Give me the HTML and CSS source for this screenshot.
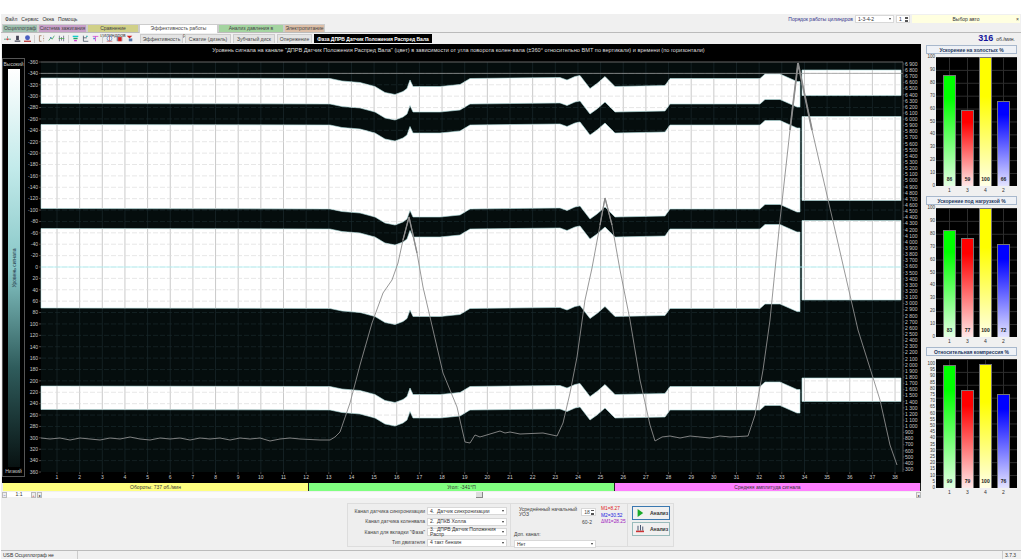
FILE: index.html
```html
<!DOCTYPE html>
<html lang="ru">
<head>
    <meta charset="UTF-8">
    <meta name="viewport" content="width=device-width, initial-scale=1.0">
    <title>Эффективность работы цилиндров</title>
    <link rel="stylesheet" href="styles.css">
</head>
<body>
    <div class="app">
        <div class="menu-row">
            <div class="menu">
                <span>Файл</span><span>Сервис</span><span>Окна</span><span>Помощь</span>
            </div>
            <div class="order">
                <span class="order-label">Порядок работы цилиндров</span>
                <div class="combo order-combo"><span>1-3-4-2</span><i></i></div>
                <div class="spin order-spin"><span>1</span><b></b></div>
                <div class="auto-pick"><span>Выбор авто</span><em>×</em></div>
            </div>
        </div>

        <div class="tabs">
            <div class="tab tab-osc">Осциллограф</div>
            <div class="tab tab-ign">Система зажигания</div>
            <div class="tab tab-cmp">Сравнение цилиндров</div>
            <div class="tab tab-active">Эффективность работы цилиндров</div>
            <div class="tab tab-prs">Анализ давления в цилиндре</div>
            <div class="tab tab-pwr">Электропитание</div>
        </div>

        <div class="toolbar">
            <div class="tools">
                <svg viewBox="0 0 10 10"><path d="M0 6h4M6 6h4M5 2v2" stroke="#2a8a6a" fill="none"/><circle cx="5" cy="6" r="1.5" fill="#d44"/></svg>
                <svg viewBox="0 0 10 10"><path d="M3 1h4v6H3zM1 8h8v1.5H1z" fill="#445"/></svg>
                <svg viewBox="0 0 10 10"><circle cx="5" cy="4" r="3.5" fill="#4a5fc0"/><path d="M0 8h10v2H0z" fill="#b44"/></svg>
                <span class="tool-sep"></span>
                <svg viewBox="0 0 10 10"><path d="M2 1v8M2 1h3M2 9h3M8 1v1M8 4v2M8 8v1" stroke="#964" fill="none"/></svg>
                <svg viewBox="0 0 10 10"><path d="M1 8l3-4 2 2 3-5" stroke="#2a9a4a" fill="none"/><circle cx="4" cy="4" r="1" fill="#36c"/></svg>
                <svg viewBox="0 0 10 10"><path d="M2 1v8M5 3v5M8 1v8" stroke="#557" fill="none"/><path d="M1 5h8" stroke="#4a4"/></svg>
                <span class="tool-sep"></span>
                <svg viewBox="0 0 10 10"><path d="M1 1h8v2H1z" fill="#1cc"/><path d="M2 4h6v2H2z" fill="#2a6"/><path d="M3 7h4v2H3z" fill="#c4c"/></svg>
                <svg viewBox="0 0 10 10"><path d="M2 1v8h7M2 4h5" stroke="#345" fill="none"/><path d="M6 1h2v2H6z" fill="#2aa"/></svg>
                <svg viewBox="0 0 10 10"><path d="M1 2h8M5 2v7" stroke="#c3c" fill="none"/><path d="M2 4h2v2H2z" fill="#36c"/></svg>
                <span class="tool-sep"></span>
                <svg viewBox="0 0 10 10"><circle cx="5" cy="5" r="3.5" fill="none" stroke="#58c"/><path d="M1 9h8M5 1v8" stroke="#c66"/></svg>
                <svg viewBox="0 0 10 10"><path d="M1 1h2v8H1zM8 3h1v6H8z" fill="#889"/><path d="M3 3h5v6H3z" fill="#c22"/></svg>
                <svg viewBox="0 0 10 10"><path d="M1 1h8L5 5z" fill="#c22"/><path d="M4 5h5v4H4z" fill="#57a"/></svg>
            </div>
            <div class="subtabs">
                <div class="subtab st-eff">Эффективность</div>
                <div class="subtab st-cmp">Сжатие (дизель)</div>
                <div class="subtab st-gear">Зубчатый диск</div>
                <div class="subtab st-adv">Опережение</div>
                <div class="subtab subtab-active">Фаза ДПРВ Датчик Положения Распред Вала</div>
            </div>
            <div class="rpm"><strong>316</strong><span>об./мин.</span></div>
        </div>

        <div class="workspace">
            <div class="left-col">
                <div class="scope">
                    <div class="scope-title">Уровень сигнала на канале "ДПРВ Датчик Положения Распред Вала" (цвет) в зависимости от угла поворота колен-вала (±360° относительно ВМТ по вертикали) и времени (по горизонтали)</div>
                    <div class="scope-body">
                        <div class="level">
                            <span>Высокий</span>
                            <div class="level-bar"><span class="level-name">Уровень сигнала</span></div>
                            <span>Низкий</span>
                        </div>
                        <svg class="plot" id="plot" viewBox="25 58 896 425" xmlns="http://www.w3.org/2000/svg"></svg>
                    </div>
                </div>
                <div class="stripes">
                    <div class="stripe stripe-rpm">Обороты: 737 об./мин</div>
                    <div class="stripe stripe-ang">Угол: -341°П</div>
                    <div class="stripe stripe-amp">Средняя амплитуда сигнала</div>
                </div>
                <div class="scroll-row">
                    <div class="zoom-btn zoom-minus">−</div>
                    <div class="zoom-val">1:1</div>
                    <div class="zoom-btn zoom-plus">+</div>
                    <div class="zoom-btn">▸</div>
                    <div class="scroll-track"><div class="scroll-thumb"></div></div>
                    <div class="zoom-btn">▸</div>
                </div>
            </div>

            <div class="side-col">
                <div class="gauge" data-step="10" data-top="100" data-values="86,59,100,66"></div>
                <div class="gauge" data-step="10" data-top="100" data-values="83,77,100,72"></div>
                <div class="gauge" data-step="5" data-top="104" data-values="99,79,100,76"></div>
            </div>
        </div>

        <div class="bottom">
            <div class="controls">
                <div class="channels">
                    <label>Канал датчика синхронизации</label>
                    <div class="combo"><span>4.&nbsp; Датчик синхронизации</span><i></i></div>
                    <label>Канал датчика коленвала</label>
                    <div class="combo"><span>2.&nbsp; ДПКВ Холла</span><i></i></div>
                    <label>Канал для вкладки "Фаза"</label>
                    <div class="combo"><span>3.&nbsp; ДПРВ Датчик Положения Распр</span><i></i></div>
                    <label>Тип двигателя</label>
                    <div class="combo"><span>4 такт бензин</span><i></i></div>
                </div>
                <div class="params">
                    <div class="param-line">
                        <span>Усреднённый начальный УОЗ</span>
                        <div class="spin"><span>18</span><b></b></div>
                    </div>
                    <div class="param-gear">60-2</div>
                    <div class="param-extra">Доп. канал:</div>
                    <div class="combo"><span>Нет</span><i></i></div>
                </div>
                <div class="marks">
                    <div class="mark-1">M1=8.27</div>
                    <div class="mark-2">M2=30.52</div>
                    <div class="mark-d">ΔM1=28.25</div>
                </div>
                <div class="actions">
                    <div class="action action-focus">
                        <svg viewBox="0 0 10 10"><path d="M2 0l7 5-7 5z" fill="#1aaa2a"/></svg>
                        <span>Анализ</span>
                    </div>
                    <div class="action">
                        <svg viewBox="0 0 10 10"><path d="M0 7h10v2H0z" fill="#c33"/><path d="M2 1h1v6H2zM5 0h1v7H5zM8 2h1v5H8z" fill="#235"/></svg>
                        <span>Анализ</span>
                    </div>
                </div>
            </div>
        </div>

        <div class="status">
            <div class="status-usb">USB Осциллограф не подключен</div>
            <div class="status-fill"></div>
            <div class="status-ver">3.7.3</div>
        </div>
    </div>

    <script src="chart.js"></script>
</body>
</html>
```

FILE: styles.css
```css
* {
    margin: 0;
    padding: 0;
    box-sizing: border-box;
}

body {
    background: white;
    color: #333;
    font-family: "Liberation Sans", Arial, sans-serif;
    font-size: 5px;
    line-height: 1;
    overflow: hidden;
}

.app {
    display: flex;
    flex-direction: column;
    height: 545px;
    width: 1020px;
    margin: 14px 0 0 1px;
    background: #f0f0f0;
}

.menu-row {
    display: flex;
    justify-content: space-between;
    align-items: center;
    height: 10px;
}

.menu {
    display: flex;
    gap: 4px;
    padding-left: 4px;
}

.order {
    display: flex;
    align-items: center;
    gap: 2px;
    height: 9px;
}

.order-label {
    color: #33338a;
}

.combo {
    display: flex;
    justify-content: space-between;
    align-items: center;
    background: white;
    border: 1px solid #d8d8d8;
    height: 8px;
    padding: 0 2px;
}

.combo i {
    width: 0;
    height: 0;
    border-left: 1.5px solid transparent;
    border-right: 1.5px solid transparent;
    border-top: 2px solid #333;
}

.order-combo {
    width: 39px;
}

.spin {
    display: flex;
    justify-content: space-between;
    align-items: center;
    background: white;
    border: 1px solid #d8d8d8;
    height: 8px;
    padding: 0 1px 0 2px;
}

.spin b {
    width: 3px;
    height: 5px;
    background:
        linear-gradient(to bottom, #555 0 1.5px, transparent 1.5px 3.5px, #555 3.5px);
}

.order-spin {
    width: 14px;
}

.auto-pick {
    position: relative;
    width: 108px;
    height: 8px;
    line-height: 8px;
    text-align: center;
    background: #ffffe0;
    margin-right: 1px;
}

.auto-pick em {
    position: absolute;
    right: 1px;
    font-style: normal;
}

.tabs {
    display: flex;
    align-items: flex-end;
    height: 9px;
    padding-left: 1px;
    border-bottom: 1px solid #bbb;
}

.tab {
    height: 8px;
    line-height: 8px;
    text-align: center;
    border: 1px solid #ccc;
    border-bottom: none;
    line-height: 7px;
    color: #444;
}

.tab-osc { width: 36px; background: #9fc0b0; }
.tab-ign { width: 49px; background: #c8a0c8; }
.tab-cmp { width: 52px; background: #d0d088; }
.tab-active { width: 79px; height: 9px; background: white; margin-bottom: -1px; }
.tab-prs { width: 66px; background: #a4d4a0; }
.tab-pwr { width: 41px; background: #dcbfa8; }

.toolbar {
    display: flex;
    align-items: center;
    height: 11px;
}

.tools {
    display: flex;
    align-items: center;
    gap: 3px;
    width: 139px;
    padding-left: 3px;
}

.tools svg {
    width: 7px;
    height: 7px;
}

.tool-sep {
    width: 1px;
    height: 8px;
    background: #ccc;
}

.subtabs {
    display: flex;
    gap: 2px;
    align-items: stretch;
    height: 9px;
}

.subtab {
    line-height: 8px;
    text-align: center;
    background: #e4e4e4;
    border: 1px solid #ccc;
    border-bottom: none;
    color: #444;
}

.st-eff { width: 43px; }
.st-cmp { width: 46px; }
.st-gear { width: 42px; }
.st-adv { width: 35px; }

.subtab-active {
    width: 118px;
    background: black;
    border-color: black;
    color: white;
    font-weight: bold;
}

.rpm {
    display: flex;
    align-items: baseline;
    gap: 3px;
    margin-left: auto;
    padding-right: 6px;
}

.rpm strong {
    color: #14149a;
    font-size: 9px;
}

.workspace {
    display: flex;
    height: 454px;
    gap: 2px;
}

.left-col {
    width: 920px;
    padding-left: 1px;
    display: flex;
    flex-direction: column;
}

.scope {
    background: black;
    height: 439px;
}

.scope-title {
    height: 14px;
    line-height: 13px;
    text-align: center;
    color: #ddd;
    font-size: 5.6px;
    padding-right: 6px;
}

.scope-body {
    display: flex;
    height: 425px;
}

.level {
    display: flex;
    flex-direction: column;
    align-items: center;
    justify-content: space-between;
    width: 23px;
    height: 419px;
    padding: 3px 0 2px;
    border: 1px solid #555;
    color: #ccc;
    flex: none;
}

.level-bar {
    position: relative;
    width: 12px;
    height: 398px;
    background: linear-gradient(to bottom, white 0%, #c2eaea 25%, #86c6c6 50%, #2f5c5c 75%, #081212 100%);
}

.level-name {
    position: absolute;
    left: 50%;
    top: 50%;
    transform: translate(-50%, -50%) rotate(-90deg);
    white-space: nowrap;
    color: #234;
}

.plot {
    display: block;
    width: 896px;
    height: 425px;
    flex: none;
}

.plot text {
    font-family: "Liberation Sans", Arial, sans-serif;
    font-size: 5px;
    fill: #ccc;
}

.stripes {
    display: flex;
    height: 8px;
    padding-left: 1px;
    color: #333;
}

.stripe {
    line-height: 8px;
    text-align: center;
    border-right: 1px solid #222;
}

.stripe-rpm { width: 306px; background: #ffff80; }
.stripe-ang { width: 306px; background: #80ff80; }
.stripe-amp { flex: 1; background: #ff80ff; }

.scroll-row {
    display: flex;
    align-items: center;
    height: 7px;
}

.zoom-btn {
    width: 5px;
    height: 6px;
    line-height: 6px;
    text-align: center;
    background: #eee;
    border: 1px solid #bbb;
    font-size: 4px;
    flex: none;
}

.zoom-minus {
    color: #22a;
}

.zoom-plus {
    color: #c22;
    margin-right: 1px;
}

.zoom-val {
    width: 24px;
    text-align: center;
    background: white;
}

.scroll-track {
    flex: 1;
    height: 6px;
    background: #fafafa;
    display: flex;
    justify-content: center;
}

.scroll-thumb {
    width: 7px;
    height: 6px;
    background: #ddd;
    border-right: 1px solid #888;
    border-bottom: 1px solid #888;
}

.side-col {
    display: flex;
    flex-direction: column;
    width: 95px;
    padding-top: 1px;
}

.gauge {
    height: 151.3px;
    padding-left: 3px;
}

.gauge-title {
    height: 9px;
    line-height: 8px;
    width: 91px;
    text-align: center;
    color: #22345a;
    font-weight: bold;
    background: #eef1f6;
    border: 1px solid #a8b8cc;
    margin-bottom: 3px;
}

.gauge-body {
    display: flex;
    height: 129px;
}

.gauge-scale {
    position: relative;
    width: 10px;
    color: #333;
}

.gauge-scale span {
    position: absolute;
    right: 1px;
    transform: translateY(-50%);
    font-size: 4.5px;
}

.gauge-plot {
    display: flex;
    align-items: flex-end;
    gap: 5px;
    width: 81px;
    padding-left: 7px;
    background-color: black;
    background-image:
        linear-gradient(to right, #2c2c2c 1px, transparent 1px),
        linear-gradient(to bottom, #2c2c2c 1px, transparent 1px);
    background-size: 18px 12.9px;
    background-position: 13px 0;
}

.bar {
    position: relative;
    width: 13px;
    border: 1px solid #777;
    border-bottom: none;
}

.bar span {
    position: absolute;
    left: 0;
    right: 0;
    bottom: 4px;
    text-align: center;
    color: #222;
    font-weight: bold;
}

.bar-1 { background: linear-gradient(to bottom, #00ff00, #00ff00 20%, #e4ffe4); }
.bar-2 { background: linear-gradient(to bottom, #ff0000, #ff0000 15%, #ffe8e8); }
.bar-3 { background: linear-gradient(to bottom, #ffff00, #ffff00 30%, #ffffe8); }
.bar-4 { background: linear-gradient(to bottom, #0000ff, #0000ff 15%, #e4e4ff); }

.gauge-names {
    display: flex;
    gap: 5px;
    padding: 2px 0 0 17px;
}

.gauge-names span {
    width: 13px;
    text-align: center;
}

.bottom {
    display: flex;
    height: 52px;
    padding: 5px 0 0 346px;
}

.controls {
    display: flex;
    width: 327px;
    height: 44px;
    border: 1px solid #ddd;
    background: #eeeeee;
}

.channels {
    display: grid;
    grid-template-columns: 77px 80px;
    grid-auto-rows: 8px;
    row-gap: 2.5px;
    column-gap: 2px;
    align-items: center;
    width: 163px;
    padding-top: 3px;
    border-right: 1px solid #ddd;
}

.channels label {
    text-align: right;
    color: #444;
}

.params {
    width: 90px;
    padding: 3px 5px 0 3px;
}

.param-line {
    display: flex;
    align-items: center;
    justify-content: space-between;
    color: #444;
    padding-left: 5px;
}

.param-line .spin {
    width: 16px;
}

.param-gear {
    text-align: right;
    padding: 3px 4px 0 0;
    color: #444;
}

.param-extra {
    padding: 7px 0 3px;
    color: #444;
}

.marks {
    width: 27px;
    padding-top: 2px;
    font-size: 4.8px;
    line-height: 6.6px;
    border-right: 1px solid #ddd;
}

.mark-1 { color: #e02020; }
.mark-2 { color: #2020e0; }
.mark-d { color: #a020c0; }

.actions {
    display: flex;
    flex-direction: column;
    gap: 2px;
    padding: 2px 0 0 4px;
}

.action {
    display: flex;
    align-items: center;
    gap: 6px;
    width: 38px;
    height: 14px;
    padding-left: 3px;
    background: #f0f0f0;
    border: 1px solid #9bb;
    font-weight: bold;
}

.action-focus {
    border-color: #3a78b0;
}

.action svg {
    width: 8px;
    height: 8px;
}

.status {
    display: flex;
    height: 9px;
    line-height: 8px;
    border-top: 1px solid #bbb;
}

.status-usb {
    width: 77px;
    padding-left: 2px;
    border-right: 1px solid #ccc;
}

.status-fill {
    flex: 1;
}

.status-ver {
    width: 19px;
    padding-left: 2px;
    border-left: 1px solid #ccc;
}
```

FILE: chart.js
```js
const SVG_NS = 'http://www.w3.org/2000/svg';
const plot = document.getElementById('plot');

const LEFT = 41, RIGHT = 901, TOP = 62, BOTTOM = 472;
const BREAK_X = 800;

// how far the signal edges move down from their base line
const edge = [
    [41, -0.5], [330, 0], [342, 2.5], [360, 4], [375, 8], [385, 14], [395, 16], [403, 13], [407, 10],
    [410, 1.5], [413, 8], [440, 8], [460, 6], [470, 0], [560, -1], [567, 1.5], [575, -2], [580, -3],
    [590, 10], [597, 5], [605, -2], [615, 8], [665, 7], [670, 0], [760, 0], [765, -4.5], [780, -4.5],
    [797, 3], [800, 3]
];

// white bands, base lines for the part left of BREAK_X; right of it they sit higher
const bands = [[78.5, 104], [125, 209], [229, 308.5], [386.5, 410]];
const RIGHT_SHIFT = -8.5;

const trace = [
    [41, 438], [50, 439], [60, 438], [70, 440], [80, 438], [90, 439], [100, 440], [110, 438], [120, 439],
    [130, 437], [140, 439], [150, 440], [160, 438], [170, 439], [180, 438], [190, 440], [200, 438], [210, 439],
    [220, 438], [230, 440], [240, 438], [250, 439], [260, 438], [270, 441], [280, 439], [290, 438], [300, 439],
    [320, 440], [330, 440], [335, 437], [340, 432], [350, 403], [360, 365], [372, 323], [383, 293], [392, 280],
    [398, 263], [403, 240], [409, 217], [417, 253], [423, 287], [430, 317], [443, 373], [457, 407], [465, 442],
    [470, 443], [475, 435], [480, 437], [490, 434], [500, 431], [505, 433], [510, 432], [520, 434], [543, 433],
    [557, 436], [563, 423], [570, 393], [577, 357], [585, 300], [592, 268], [600, 225], [605, 198], [612, 225],
    [620, 270], [630, 320], [640, 380], [650, 425], [655, 441], [662, 437], [670, 436], [680, 438], [690, 436],
    [700, 437], [710, 438], [720, 436], [730, 437], [748, 436], [755, 415], [763, 370], [770, 320], [780, 220],
    [790, 130], [798, 63], [812, 130], [835, 230], [858, 330], [880, 400], [890, 445], [897, 465]
];

function el(name, attrs, text) {
    const node = document.createElementNS(SVG_NS, name);
    Object.keys(attrs).forEach(key => node.setAttribute(key, attrs[key]));
    if (text !== undefined) {
        node.textContent = text;
    }
    plot.appendChild(node);
    return node;
}

function bandPath(top, bottom) {
    const upper = [], lower = [];
    edge.forEach(p => {
        upper.push(`${p[0]},${p[1] + top}`);
        lower.unshift(`${p[0]},${p[1] + bottom}`);
    });
    const left = `M${upper.join('L')}L${lower.join('L')}Z`;
    const t = top + RIGHT_SHIFT, b = bottom + RIGHT_SHIFT;
    return `${left}M${BREAK_X + 2},${t}L${RIGHT},${t}L${RIGHT},${b}L${BREAK_X + 2},${b}Z`;
}

function xAt(n) {
    return 57 + 22.65 * (n - 1);
}

function yAt(i) {
    return TOP + (BOTTOM - TOP) * i / 36;
}

function drawGrid(vertical, horizontal, parent) {
    let d = '';
    for (let n = 1; n <= 38; n++) {
        d += `M${xAt(n)},${TOP}V${BOTTOM}`;
    }
    const v = el('path', { d: d, stroke: vertical, 'stroke-width': 0.8, fill: 'none' });
    d = '';
    for (let i = 1; i < 36; i++) {
        d += `M${LEFT},${yAt(i)}H${RIGHT}`;
    }
    const h = el('path', { d: d, stroke: horizontal, 'stroke-width': 0.7, 'stroke-dasharray': '5 2', fill: 'none' });
    if (parent) {
        parent.appendChild(v);
        parent.appendChild(h);
    }
}

function drawPlot() {
    const allBands = bands.map(b => bandPath(b[0], b[1])).join('');

    el('rect', { x: LEFT, y: TOP, width: RIGHT - LEFT + 2, height: BOTTOM - TOP, fill: '#050d0d' });
    drawGrid('#18262a', '#1a2a2c');

    const defs = el('defs', {});
    const clip = el('clipPath', { id: 'bandClip' });
    clip.appendChild(el('path', { d: allBands }));
    defs.appendChild(clip);

    el('path', { d: allBands, fill: 'white', stroke: '#b4e0e0', 'stroke-width': 0.6 });

    const onWhite = el('g', { 'clip-path': 'url(#bandClip)' });
    drawGrid('#bcbcbc', '#dcdcdc', onWhite);

    // marker lines over everything
    el('path', { d: `M${LEFT},${TOP}H903`, stroke: '#666', 'stroke-width': 1 });
    el('path', { d: `M${LEFT},${yAt(1)}H903`, stroke: '#999', 'stroke-width': 0.8 });
    el('path', { d: `M${LEFT},${yAt(18)}H${RIGHT}`, stroke: '#a8f0f4', 'stroke-width': 0.8 });

    el('polyline', {
        points: trace.map(p => p.join(',')).join(' '),
        fill: 'none', stroke: '#8c8c8c', 'stroke-width': 0.9
    });
    el('polyline', {
        points: '790,130 798,63 812,130',
        fill: 'none', stroke: '#8c8c8c', 'stroke-width': 1.8
    });
    el('polyline', {
        points: '403,240 409,217 417,253',
        fill: 'none', stroke: '#8c8c8c', 'stroke-width': 1.3
    });
    el('polyline', {
        points: '600,225 605,198 612,225',
        fill: 'none', stroke: '#8c8c8c', 'stroke-width': 1.3
    });

    // left scale, degrees
    for (let i = 0; i <= 36; i++) {
        const value = (i - 18) * 20;
        el('text', { x: 38, y: yAt(i) + 1.8, 'text-anchor': 'end' }, value);
        el('path', { d: `M39,${yAt(i)}H41`, stroke: '#777', 'stroke-width': 0.6 });
    }

    // right scale, time
    el('path', { d: `M903,${TOP}V${BOTTOM}`, stroke: '#666', 'stroke-width': 0.8 });
    for (let i = 0; i <= 66; i++) {
        const value = 6900 - i * 100;
        const label = value >= 1000 ? `${Math.floor(value / 1000)} ${String(value % 1000).padStart(3, '0')}` : value;
        el('text', { x: 905, y: 64 + i * 6.14 + 1.8 }, label);
        el('path', { d: `M903,${64 + i * 6.14}h1.5`, stroke: '#777', 'stroke-width': 0.5 });
    }

    // bottom scale, cycles
    for (let n = 1; n <= 38; n++) {
        el('text', { x: xAt(n), y: 479, 'text-anchor': 'middle' }, n);
        el('path', { d: `M${xAt(n)},${BOTTOM}v2`, stroke: '#777', 'stroke-width': 0.6 });
    }
}

function buildGauges() {
    const titles = ['Ускорение на холостых %', 'Ускорение под нагрузкой %', 'Относительная компрессия %'];
    const names = [1, 3, 4, 2];

    document.querySelectorAll('.gauge').forEach((gauge, index) => {
        const step = Number(gauge.dataset.step);
        const top = Number(gauge.dataset.top);
        const values = gauge.dataset.values.split(',').map(Number);

        let scale = '';
        for (let v = 100; v >= 0; v -= step) {
            scale += `<span style="top:${(1 - v / top) * 100}%">${v}</span>`;
        }
        const bars = values.map((v, i) =>
            `<div class="bar bar-${i + 1}" style="height:${v / top * 100}%"><span>${v}</span></div>`
        ).join('');
        const labels = names.map(n => `<span>${n}</span>`).join('');

        gauge.innerHTML =
            `<div class="gauge-title">${titles[index]}</div>` +
            `<div class="gauge-body"><div class="gauge-scale">${scale}</div><div class="gauge-plot">${bars}</div></div>` +
            `<div class="gauge-names">${labels}</div>`;
    });
}

drawPlot();
buildGauges();
```
